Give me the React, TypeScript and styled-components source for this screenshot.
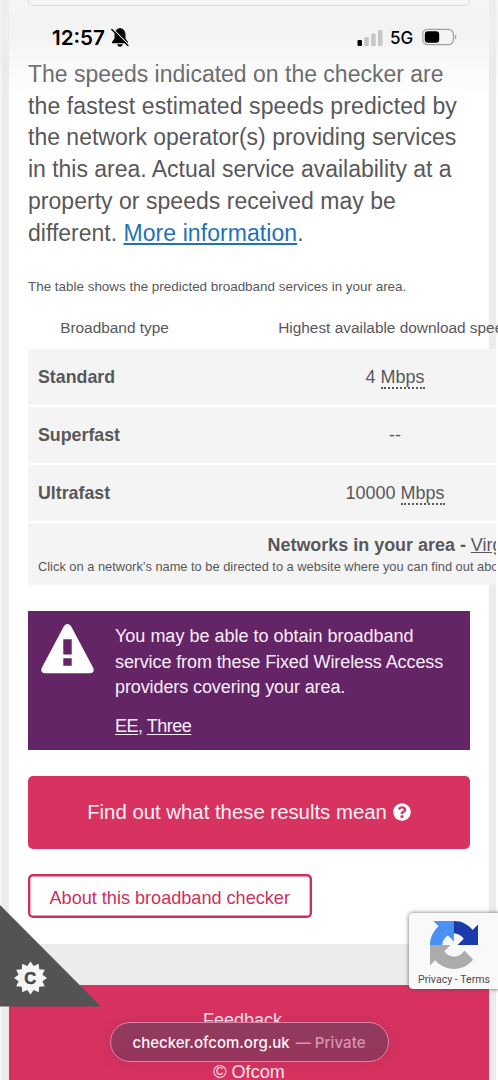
import React from 'react';
import styled, { createGlobalStyle } from 'styled-components';

const Global = createGlobalStyle`
  * { box-sizing: border-box; }
  body { margin: 0; background: #ececec; overflow: hidden; }
`;

const Page = styled.div`
  position: relative;
  width: 498px;
  height: 1080px;
  overflow: hidden;
  padding-left: 9px;
  background: linear-gradient(90deg, #f6f6f6 0 2px, #ececec 2px 496px, #fdfdfd 496px);
  font-family: "Liberation Sans", Arial, sans-serif;
  color: #58585a;
`;

const Card = styled.main`
  width: 480px;
  height: 944px;
  padding: 0 19px;
  background: #fff;
`;

const PanelEnd = styled.div`
  height: 6px;
  border: 1.5px solid #c2c2c2;
  border-top: 0;
  border-radius: 0 0 5px 5px;
`;

const Line = styled.span<{ $track?: number }>`
  display: block;
  white-space: nowrap;
  letter-spacing: ${p => p.$track ?? 0}px;
`;

const Intro = styled.p`
  margin: 53px 0 0;
  font-size: 23px;
  line-height: 31.7px;
`;

const BlueLink = styled.a`
  color: #2571b5;
  text-decoration: underline;
  text-decoration-thickness: 1.5px;
  text-underline-offset: 2px;
  letter-spacing: 0.07px;
`;

const Note = styled.p`
  margin: 28px 0 0;
  font-size: 13.43px;
  line-height: 20px;
`;

const Table = styled.section`
  width: 468px;
  margin-top: 15px;
`;

const Columns = styled.div`
  display: grid;
  grid-template-columns: 173px 388px;
  align-items: center;
`;

const HeadRow = styled(Columns)`
  width: 470px;
  overflow: hidden;
  height: 37px;
  font-size: 15.4px;
  line-height: 18px;
  padding-bottom: 5px;
  text-align: center;
`;

const Row = styled(Columns)`
  height: 56px;
  margin-bottom: 2px;
  padding-top: 1px;
  background: #f4f4f4;
  box-shadow: 0 2px #fff;
  font-size: 18px;
`;

const RowName = styled.strong`
  padding-left: 10px;
  font-size: 17.8px;
`;

const Value = styled.span`
  text-align: center;
`;

const Unit = styled.abbr`
  text-decoration: none;
  border-bottom: 2px dotted #58585a;
`;

const Networks = styled.div`
  height: 62px;
  padding: 12px 0 0 10px;
  overflow: hidden;
  background: #f4f4f4;
`;

const NetworkTitle = styled.div`
  margin-left: 229.5px;
  font-size: 17.95px;
  line-height: 20px;
  white-space: nowrap;
`;

const NetworkHint = styled.div`
  margin-top: 1px;
  font-size: 12.84px;
  line-height: 21px;
  white-space: nowrap;
`;

const Alert = styled.section`
  display: flex;
  height: 139px;
  margin-top: 26px;
  padding: 13px 0 0 13px;
  background: #632565;
  color: #fbeefc;
  font-size: 18px;
  line-height: 25.6px;
`;

const AlertIcon = styled.svg`
  width: 53px;
  height: 50px;
  margin-right: 21px;
  flex: none;
`;

const Providers = styled.p`
  margin: 12.5px 0 0;
  letter-spacing: -0.48px;
  a { text-decoration: underline; text-underline-offset: 2px; }
`;

const Primary = styled.button`
  display: flex;
  align-items: center;
  justify-content: center;
  gap: 6px;
  width: 442px;
  height: 73px;
  margin-top: 26px;
  padding: 0 0 1px;
  border: 0;
  border-radius: 5px;
  background: #d83260;
  color: #fff0f5;
  font: 20.35px "Liberation Sans", Arial, sans-serif;
`;

const Outline = styled.button`
  display: block;
  width: 284px;
  height: 44px;
  margin-top: 25px;
  padding: 4px 0 0 21.5px;
  border: 0;
  box-shadow: inset 0 0 0 2.4px #cb305c;
  border-radius: 5px;
  background: #fff;
  color: #cb305c;
  text-align: left;
  font: 18.1px "Liberation Sans", Arial, sans-serif;
`;

const Footer = styled.footer`
  width: 480px;
  height: 95px;
  margin-top: 41px;
  padding: 25px 0 0;
  display: flex;
  flex-direction: column;
  align-items: center;
  gap: 32px;
  background: #d83260;
  color: #ffe9f1;
  font-size: 18px;
  line-height: 20px;
`;

const FooterItem = styled.div<{ $shift: number }>`
  margin-left: ${p => p.$shift}px;
`;

const StatusBar = styled.header`
  position: absolute;
  inset: 0 0 auto 0;
  height: 100px;
  display: flex;
  align-items: flex-start;
  padding: 26px 41px 0 52px;
  color: #000;
  background: linear-gradient(180deg, rgba(238,238,238,.5) 0, rgba(239,239,239,.75) 16px, rgba(239,239,239,.75) 35px, rgba(228,228,228,.2) 66px, rgba(255,255,255,0) 100px);
  font-family: Inter, sans-serif;
`;

const Clock = styled.span`
  width: 56px;
  font-size: 20.6px;
  font-weight: 600;
  line-height: 24px;
  white-space: nowrap;
`;

const Bell = styled.svg`
  width: 18px;
  height: 19px;
  margin: 2px auto 0 3px;
`;

const Signal = styled.svg`
  width: 26px;
  height: 16px;
  margin: 4px 7px 0 0;
`;

const Network = styled.span`
  width: 24px;
  font-size: 17px;
  font-weight: 500;
  line-height: 24px;
`;

const Battery = styled.svg`
  width: 35px;
  height: 18px;
  margin: 2px 0 0 8px;
`;

const CookieCorner = styled.svg`
  position: absolute;
  left: 0;
  top: 905px;
  width: 102px;
  height: 102px;
`;

const Captcha = styled.aside`
  position: absolute;
  left: 409px;
  top: 913px;
  width: 95px;
  height: 76px;
  padding: 8px 0 0 9px;
  border-radius: 4px 0 0 4px;
  background: #f9f9f9;
  box-shadow: 0 0 4px rgba(70,70,70,.8);
  color: #4b4b4b;
  font: 10.6px/14px Roboto, sans-serif;
`;

const CaptchaLogo = styled.svg`
  display: block;
  width: 48px;
  height: 48px;
  margin-left: 12px;
  margin-bottom: 4px;
`;

const AddressPill = styled.div`
  position: absolute;
  left: 110px;
  top: 1022px;
  width: 279px;
  height: 40px;
  display: flex;
  align-items: center;
  gap: 6px;
  padding-left: 21.5px;
  border: 1.3px solid #df82a6;
  border-radius: 20px;
  background: linear-gradient(180deg, #913b5f, #98345c);
  box-shadow: 0 1px 16px rgba(110,40,70,.22);
  font: 500 15px Inter, sans-serif;
  color: #fff4f8;
  white-space: nowrap;
`;

const Mode = styled.span`
  color: #d696b0;
  letter-spacing: 0.08px;
`;

const intro: [string, number][] = [
  ['The speeds indicated on the checker are', 0],
  ['the fastest estimated speeds predicted by', 0.11],
  ['the network operator(s) providing services', 0],
  ['in this area. Actual service availability at a', -0.02],
  ['property or speeds received may be', 0.03],
];

const alertLines: [string, number][] = [
  ['You may be able to obtain broadband', 0],
  ['service from these Fixed Wireless Access', -0.1],
  ['providers covering your area.', -0.1],
];

const gear = Array.from({ length: 24 }, (_, i) => {
  const r = i % 2 ? 12.3 : 16.5;
  const a = (i * Math.PI) / 12;
  return `${30.5 + r * Math.cos(a)},${73 + r * Math.sin(a)}`;
}).join(' ');

export default function App() {
  return (
    <Page>
      <Global />
      <Card>
        <PanelEnd />
        <Intro>
          {intro.map(([t, k]) => <Line key={t} $track={k}>{t}</Line>)}
          <Line>different. <BlueLink>More information</BlueLink>.</Line>
        </Intro>
        <Note><Line>The table shows the predicted broadband services in your area.</Line></Note>
        <Table>
          <HeadRow>
            <Line>Broadband type</Line>
            <Line>Highest available download speed</Line>
          </HeadRow>
          <Row><RowName>Standard</RowName><Value>4 <Unit>Mbps</Unit></Value></Row>
          <Row><RowName>Superfast</RowName><Value>--</Value></Row>
          <Row><RowName>Ultrafast</RowName><Value>10000 <Unit>Mbps</Unit></Value></Row>
          <Networks>
            <NetworkTitle><strong>Networks in your area - </strong><u>Virgin Media</u></NetworkTitle>
            <NetworkHint>Click on a network’s name to be directed to a website where you can find out about</NetworkHint>
          </Networks>
        </Table>
        <Alert>
          <AlertIcon viewBox="0 0 54 51">
            <path fill="#fff" fillRule="evenodd" d="M23.3 2.2Q27-2 30.7 2.2L53.3 45Q55 50 50 50.2H4Q-1 50 .7 45ZM22.7 15.5V31H31.3V15.5ZM22.7 35V42.5H31.3V35Z" />
          </AlertIcon>
          <div>
            {alertLines.map(([t, k]) => <Line key={t} $track={k}>{t}</Line>)}
            <Providers><a>EE</a>, <a>Three</a></Providers>
          </div>
        </Alert>
        <Primary>
          <Line>Find out what these results mean</Line>
          <svg width="18" height="18" viewBox="0 0 512 512">
            <path fill="#fff" d="M504 256c0 137-111 248-248 248S8 393 8 256 119 8 256 8s248 111 248 248zM262.700 90c-54.500 0-89.300 23-116.500 63.800-3.500 5.300-2.400 12.400 2.700 16.300l34.700 26.300c5.200 3.900 12.600 3 16.700-2.100 17.900-22.700 30.100-35.800 57.300-35.800 20.400 0 45.700 13.100 45.700 33 0 15-12.400 22.700-32.500 34C247.100 238.500 216 254.900 216 296v4c0 6.600 5.400 12 12 12h56c6.600 0 12-5.400 12-12v-1.300c0-28.500 83.200-29.600 83.200-106.700 0-58-60.200-102-116.500-102zM256 338c-25.400 0-46 20.600-46 46s20.600 46 46 46 46-20.600 46-46-20.600-46-46-46z" />
          </svg>
        </Primary>
        <Outline><Line>About this broadband checker</Line></Outline>
      </Card>
      <Footer>
        <FooterItem $shift={-13}>Feedback</FooterItem>
        <FooterItem $shift={0}>© Ofcom</FooterItem>
      </Footer>

      <StatusBar>
        <Clock>12:57</Clock>
        <Bell viewBox="0 0 18 19">
          <path d="M9 0C5.500.7 3.500 3.200 3.500 6.500v4L1 14v1.300h16V14L14.500 10.500v-4C14.500 3.200 12.500.7 9 0ZM6 16.200h6Q11 18.800 9 18.800T6 16.200Z" />
          <path d="M2 1.100 18 17.100" stroke="#f5f5f5" strokeWidth="1.200" />
          <path d="M.8 1.500 16.900 17.600" stroke="#000" strokeWidth="1.400" strokeLinecap="round" />
        </Bell>
        <Signal viewBox="0 0 26 16">
          <rect x=".5" y="10" width="4.500" height="6" rx="1.200" />
          <g fill="#c6c6c6">
            <rect x="7.300" y="7" width="4.500" height="9" rx="1" />
            <rect x="14.200" y="3.500" width="4.500" height="12.500" rx="1" />
            <rect x="21" y="0" width="4.500" height="16" rx="1" />
          </g>
        </Signal>
        <Network>5G</Network>
        <Battery viewBox="0 0 35 18">
          <rect x=".8" y="1.300" width="30.600" height="15.400" rx="5" fill="none" stroke="#a2a2a2" strokeWidth="1.200" />
          <rect x="2.800" y="3.200" width="14.400" height="11.600" rx="3.200" />
          <path d="M32.800 6.500Q34.500 7.500 34.500 9T32.800 11.500Z" fill="#a2a2a2" />
        </Battery>
      </StatusBar>

      <CookieCorner viewBox="0 0 102 102">
        <path d="M0 0 101 101.500H0Z" fill="#535353" />
        <polygon points={gear} fill="#f6f6f6" />
        <text x="30.300" y="79" textAnchor="middle" fontSize="16.500" fontWeight="700" fill="#484848" stroke="#484848" strokeWidth=".5">C</text>
      </CookieCorner>

      <Captcha>
        <CaptchaLogo viewBox="0 0 64 64">
          <path fill="#1c3aa9" d="M64 31.955l-.033-1.370V4.687l-7.160 7.160C50.948 4.674 42.033.093 32.050.093c-10.400 0-19.622 4.960-25.458 12.640l11.736 11.860a15.550 15.550 0 0 1 4.754-5.334c2.050-1.600 4.952-2.906 8.968-2.906.485 0 .860.057 1.135.163 4.976.393 9.288 3.140 11.828 7.124l-8.307 8.307L64 31.953" />
          <path fill="#4a90f5" d="M31.862.094l-1.370.033H4.594l7.160 7.160C4.580 13.147 0 22.060 0 32.046c0 10.400 4.960 19.622 12.640 25.458L24.500 45.768a15.550 15.550 0 0 1-5.334-4.754c-1.600-2.050-2.906-4.952-2.906-8.968 0-.485.057-.860.163-1.135.393-4.976 3.140-9.288 7.124-11.828l8.307 8.307L31.860.095" />
          <path fill="#ababab" d="M.001 32.045l.033 1.370v25.898l7.160-7.160c5.860 7.173 14.774 11.754 24.760 11.754 10.400 0 19.622-4.960 25.458-12.640L45.675 39.404a15.550 15.550 0 0 1-4.754 5.334c-2.050 1.600-4.952 2.906-8.968 2.906-.485 0-.860-.057-1.135-.163-4.976-.393-9.288-3.140-11.828-7.124l8.307-8.307c-10.522.040-22.400.066-27.295-.005" />
        </CaptchaLogo>
        <Line>Privacy - Terms</Line>
      </Captcha>

      <AddressPill>checker.ofcom.org.uk<Mode>— Private</Mode></AddressPill>
    </Page>
  );
}
